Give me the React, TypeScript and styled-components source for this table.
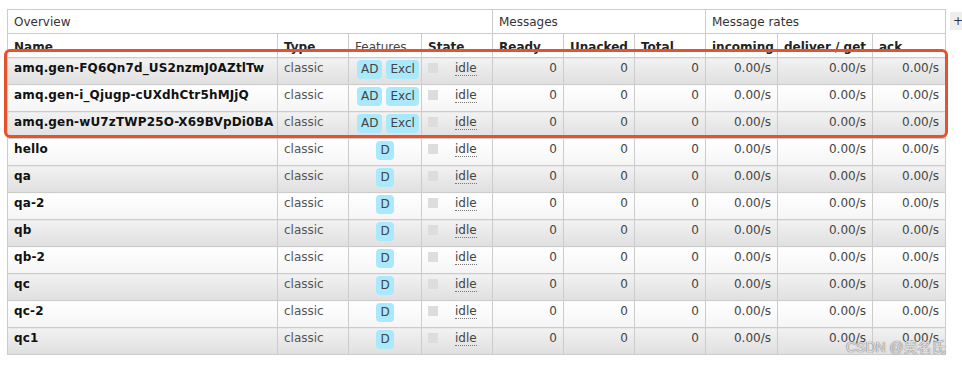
import styled, {createGlobalStyle} from "styled-components";


interface QueueRow{
    name: string;
    features: string[];
}

const queues: QueueRow[] = [
    {name: "amq.gen-FQ6Qn7d_US2nzmJ0AZtlTw", features: ["AD", "Excl"]},
    {name: "amq.gen-i_Qjugp-cUXdhCtr5hMJjQ", features: ["AD", "Excl"]},
    {name: "amq.gen-wU7zTWP25O-X69BVpDi0BA", features: ["AD", "Excl"]},
    {name: "hello", features: ["D"]},
    {name: "qa", features: ["D"]},
    {name: "qa-2", features: ["D"]},
    {name: "qb", features: ["D"]},
    {name: "qb-2", features: ["D"]},
    {name: "qc", features: ["D"]},
    {name: "qc-2", features: ["D"]},
    {name: "qc1", features: ["D"]},
];

const colWidths = [270, 71, 73, 71, 71, 71, 71, 72, 95, 73];


function App(){

    return(
        <>
            <GlobalStyle/>
            <Page>
                <QueueTable>
                    <colgroup>
                        {colWidths.map((w, i) => <col key={i} width={w}/>)}
                    </colgroup>
                    <thead>
                        <tr>
                            <GroupTh colSpan={4}>Overview</GroupTh>
                            <GroupTh colSpan={3}>Messages</GroupTh>
                            <GroupTh colSpan={3}>Message rates</GroupTh>
                        </tr>
                        <tr>
                            <ColTh>Name</ColTh>
                            <ColTh>Type</ColTh>
                            <ColTh $light>Features</ColTh>
                            <ColTh>State</ColTh>
                            <ColTh>Ready</ColTh>
                            <ColTh>Unacked</ColTh>
                            <ColTh>Total</ColTh>
                            <ColTh>incoming</ColTh>
                            <ColTh>deliver / get</ColTh>
                            <ColTh>ack</ColTh>
                        </tr>
                    </thead>
                    <tbody>
                        {queues.map((q, i) => (
                            <Row key={q.name} $alt={i % 2 === 0}>
                                <NameCell>{q.name}</NameCell>
                                <Cell>classic</Cell>
                                <FeatureCell>
                                    {q.features.map(f => <Badge key={f}>{f}</Badge>)}
                                </FeatureCell>
                                <Cell>
                                    <StateBox/>
                                    <StateText>idle</StateText>
                                </Cell>
                                <NumCell>0</NumCell>
                                <NumCell>0</NumCell>
                                <NumCell>0</NumCell>
                                <NumCell>0.00/s</NumCell>
                                <NumCell>0.00/s</NumCell>
                                <NumCell>0.00/s</NumCell>
                            </Row>
                        ))}
                    </tbody>
                </QueueTable>
                <ColumnToggle>+/-</ColumnToggle>
                <Highlight/>
                <Watermark>CSDN @吴名氏</Watermark>
            </Page>
        </>
    )
}


const GlobalStyle = createGlobalStyle`
    html, body{
        margin: 0;
        padding: 0;
        background: #fff;
        overflow: hidden;
    }
`

const Page = styled.div`
    position: relative;
    width: 962px;
    height: 365px;
    display: flex;
    align-items: flex-start;
    gap: 4px;
    padding: 9px 0 0 7px;
    box-sizing: border-box;
    font-family: "DejaVu Sans", Verdana, sans-serif;
    font-size: 12px;
    color: #444;
`

const QueueTable = styled.table`
    flex-shrink: 0;
    width: 939px;
    table-layout: fixed;
    border-collapse: collapse;
    line-height: 15px;
`

const GroupTh = styled.th`
    border: 1px solid #ccc;
    padding: 5px 6px 3px;
    text-align: left;
    font-weight: 400;
    color: #333;
    background: #fff;
    white-space: nowrap;
`

const ColTh = styled.th<{$light?: boolean}>`
    border: 1px solid #ccc;
    padding: 6px 6px 2px;
    text-align: left;
    font-weight: ${p => p.$light ? 400 : 700};
    color: ${p => p.$light ? '#444' : '#222'};
    background: #fff;
    white-space: nowrap;
    overflow: hidden;
`

const Row = styled.tr<{$alt: boolean}>`
    td{
        background: ${p => p.$alt
            ? 'linear-gradient(to bottom, #f2f2f2 0%, #dfdfdf 100%)'
            : 'linear-gradient(to bottom, #ffffff 0%, #f5f5f5 100%)'};
    }
`

const Cell = styled.td`
    border: 1px solid #ccc;
    padding: 3px 6px 1px;
    height: 22px;
    vertical-align: top;
    white-space: nowrap;
    overflow: hidden;
    color: #555;
`

const NameCell = styled(Cell)`
    font-weight: 700;
    letter-spacing: 0.15px;
    color: #111;
`

const NumCell = styled(Cell)`
    text-align: right;
    color: #444;
`

const FeatureCell = styled(Cell)`
    text-align: center;
    padding-top: 2px;
`

const Badge = styled.span`
    display: inline-block;
    vertical-align: top;
    padding: 2px 4px;
    margin: 0 2px;
    line-height: 15px;
    border-radius: 4px;
    background: #aae9fc;
    color: #444;
`

const StateBox = styled.span`
    display: inline-block;
    vertical-align: top;
    width: 10px;
    height: 10px;
    margin-top: 2px;
    margin-right: 17px;
    background: #ddd;
`

const StateText = styled.abbr`
    text-decoration: none;
    border-bottom: 1px dotted #777;
    color: #444;
`

const ColumnToggle = styled.span`
    flex-shrink: 0;
    margin-top: 3px;
    padding: 2px 3px 1px;
    line-height: 15px;
    background: #eee;
    color: #333;
    white-space: nowrap;
`

const Highlight = styled.div`
    position: absolute;
    left: 4px;
    top: 49px;
    width: 944px;
    height: 89px;
    box-sizing: border-box;
    border: 3px solid #e4532c;
    border-radius: 6px;
    pointer-events: none;
`

const Watermark = styled.div`
    position: absolute;
    left: 846px;
    top: 339px;
    font-family: "Liberation Sans", "Noto Sans CJK SC", sans-serif;
    font-size: 14px;
    line-height: 16px;
    color: rgba(235, 235, 235, 0.9);
    text-shadow: 0 0 1px #777, 0 0 1px #777;
    white-space: nowrap;
`


export default App;
